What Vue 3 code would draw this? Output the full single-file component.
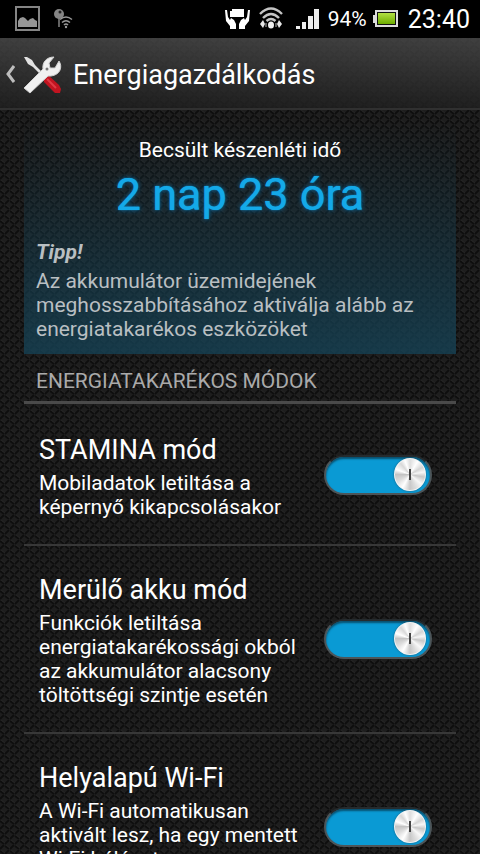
<script setup>
import { ref } from 'vue'

const modes = ref([
  {
    id: 'stamina',
    title: 'STAMINA mód',
    text: 'Mobiladatok letiltása a\nképernyő kikapcsolásakor',
    on: true,
  },
  {
    id: 'low-battery',
    title: 'Merülő akku mód',
    text: 'Funkciók letiltása\nenergiatakarékossági okból\naz akkumulátor alacsony\ntöltöttségi szintje esetén',
    on: true,
  },
  {
    id: 'location-wifi',
    title: 'Helyalapú Wi-Fi',
    text: 'A Wi-Fi automatikusan\naktivált lesz, ha egy mentett\nWi-Fi hálózat\nközelébe kerül',
    on: true,
  },
])
</script>

<template>
  <div class="screen">
    <svg class="weave" aria-hidden="true">
      <defs>
        <pattern id="weave" width="10" height="10" patternUnits="userSpaceOnUse">
          <rect width="10" height="10" fill="#1e1e1e" />
          <g stroke="#0e0e0e" stroke-width="2">
            <path d="M0 1l4 3M5 6l4 3" />
            <path d="M5 4l4-4M0 9l4-4" />
          </g>
          <path d="M1 0l4 3M6 5l4 3" stroke="#242424" stroke-width="1" />
        </pattern>
      </defs>
      <rect width="100%" height="100%" fill="url(#weave)" />
    </svg>

    <div class="status">
      <svg class="s-pic" width="26" height="26" viewBox="0 0 26 26">
        <rect x="1" y="1" width="23" height="23" fill="none" stroke="#858585" stroke-width="2" />
        <path d="M3 21v-6l2-3 3-1 2 1 3 3 2-2 3-1 2 2 2 1v6z" fill="#969696" />
      </svg>
      <svg class="s-key" width="22" height="22" viewBox="0 0 22 22">
        <circle cx="6" cy="6" r="5" fill="#858585" />
        <circle cx="7" cy="4" r="1.500" fill="#222" />
        <path d="M6 10v9" stroke="#858585" stroke-width="1.500" />
        <g fill="none" stroke="#999" stroke-width="1.500">
          <path d="M7 11.500q6-5 12 0M9 14.500q4-3.500 8 0M11 17q2-2 4 0" />
        </g>
        <circle cx="13" cy="19" r="1.200" fill="#999" />
      </svg>
      <span class="spacer"></span>
      <svg class="s-hand" width="25" height="22" viewBox="0 0 25 22">
        <path d="M5 3h2V1h12v8H5z" fill="#fff" />
        <path
          d="M0 2h2l1 7 2 3 1-2 3 2 2 4v5H5v-3l-4-5zM25 2h-2l-1 7-2 3-1-2-3 2-2 4v5h6v-3l4-5z"
          fill="#fff"
        />
      </svg>
      <svg class="s-wifi" width="24" height="24" viewBox="0 0 24 24">
        <g fill="none" stroke="#c4c4c4" stroke-width="2.400">
          <path d="M1 7q11-11 22 0M4 11q8-8 16 0M7.500 14q4.500-4 9 0" />
        </g>
        <ellipse cx="12" cy="18" rx="3" ry="3.500" fill="#f2f2f2" />
        <path d="M1 17l3-4 2 4-2 4zM23 17l-3-4-2 4 2 4z" fill="#e8e8e8" />
        <path d="M7 16v4M17 16v4" stroke="#bbb" />
      </svg>
      <svg class="s-signal" width="24" height="20" viewBox="0 0 24 20">
        <path d="M0 17h4v3H0zM6 13h4v7H6zM12 7h5v13h-5zM18 0h5v20h-5z" fill="#eee" />
      </svg>
      <span class="percent">94%</span>
      <svg class="s-batt" width="25" height="18" viewBox="0 0 25 18">
        <defs>
          <linearGradient id="charge" x1="0" y1="0" x2="0" y2="1">
            <stop offset="0" stop-color="#b2e043" />
            <stop offset="1" stop-color="#6ead00" />
          </linearGradient>
        </defs>
        <path d="M0 5h3v8H0z" fill="#ddd" />
        <rect x="3" y="1" width="21" height="15" fill="#111" stroke="#ddd" stroke-width="2" />
        <rect x="5" y="3" width="17" height="11" fill="url(#charge)" />
      </svg>
      <time class="clock">23:40</time>
    </div>

    <header class="bar">
      <a class="back" href="#" aria-label="Vissza">
        <svg width="11" height="20" viewBox="0 0 11 20">
          <path d="M10 1L4 9l6 8" fill="none" stroke="#bdbdbd" stroke-width="3" />
        </svg>
        <svg width="40" height="40" viewBox="0 0 40 40">
          <path d="M1 2l3 0 5 3 3 5 9 9-2 2-9-9-5-3z" fill="#e2e2e2" />
          <path d="M21 23l4-3 11 10 2 4-1 4-5 0-11-11z" fill="#c11420" />
          <path d="M24 24l9 9" stroke="#e03a45" stroke-width="2" />
          <path
            d="M1 33L20 14c-1-6 3-12 11-12l-5 6 1 5 5 0 4-7c4 6 1 14-8 15l-3 0L7 38z"
            fill="#f0f0f0"
            stroke="#cfcfcf"
            stroke-width="1"
          />
          <circle cx="24" cy="14" r="1.500" fill="#777" />
        </svg>
      </a>
      <h1>Energiagazdálkodás</h1>
    </header>

    <main>
      <section class="estimate">
        <p class="label">Becsült készenléti idő</p>
        <p class="time">2 nap 23 óra</p>
        <p class="tip">Tipp!</p>
        <p class="hint">Az akkumulátor üzemidejének meghosszabbításához aktiválja alább az energiatakarékos eszközöket</p>
      </section>

      <h2>ENERGIATAKARÉKOS MÓDOK</h2>
      <ul>
        <li v-for="mode in modes" :key="mode.id">
          <label :for="mode.id">
            <span class="name">{{ mode.title }}</span>
            <span class="text">{{ mode.text }}</span>
          </label>
          <input :id="mode.id" v-model="mode.on" class="toggle" type="checkbox" role="switch" />
        </li>
      </ul>
    </main>
  </div>
</template>

<style>
body {
  margin: 0;
  background: #151515;
}
</style>

<style scoped>
.screen {
  position: relative;
  isolation: isolate;
  height: 100vh;
  overflow: hidden;
  color: #fff;
  font-family: Roboto, "Noto Sans", sans-serif;
}
.weave {
  position: absolute;
  inset: 0;
  z-index: -1;
  width: 100%;
  height: 100%;
}
h1,
h2,
p,
ul {
  margin: 0;
  padding: 0;
  font-weight: 400;
}
.status {
  display: flex;
  align-items: center;
  height: 38px;
  padding: 0 10px 0 15px;
  background: #000;
}
.s-key {
  margin-left: 12px;
}
.spacer {
  flex: 1;
}
.s-wifi {
  margin-left: 9px;
}
.s-signal {
  margin-left: 13px;
}
.percent {
  margin-left: 8px;
  font-size: 21px;
}
.s-batt {
  margin-left: 6px;
}
.clock {
  margin-left: 10px;
  font-size: 25px;
}
.bar {
  display: flex;
  align-items: center;
  box-sizing: border-box;
  height: 72px;
  padding: 3px 0 0 4px;
  border-bottom: 2px solid #303030;
  background: linear-gradient(rgba(72, 72, 72, 0.8), rgba(32, 32, 32, 0.8));
}
.back {
  display: flex;
  align-items: center;
  gap: 8px;
  margin-right: 10px;
}
h1 {
  font-size: 27px;
  line-height: 32px;
}
main {
  padding: 12px 24px 0;
}
.estimate {
  padding: 16px 12px 13px;
  background: linear-gradient(rgba(22, 66, 85, 0), rgba(22, 66, 85, 0.8));
}
.label {
  font-size: 21px;
  line-height: 24px;
  text-align: center;
}
.time {
  color: #14a9e8;
  font-size: 45px;
  line-height: 66px;
  text-align: center;
  text-shadow: 0 0 1px #14a9e8, 0 0 5px rgba(0, 120, 190, 0.8);
}
.tip {
  margin-top: 12px;
  color: #b9bfc2;
  font-size: 21px;
  font-style: italic;
  font-weight: 700;
  line-height: 24px;
}
.hint {
  margin-top: 5px;
  color: #b9bfc2;
  font-size: 21px;
  line-height: 24px;
}
h2 {
  padding: 15px 12px 8px;
  border-bottom: 3px solid #4a4a4a;
  color: #aaa;
  font-size: 21px;
  line-height: 24px;
}
ul {
  padding-top: 2px;
  list-style: none;
}
li {
  display: flex;
  align-items: center;
  justify-content: space-between;
  padding: 24px 24px 25px 15px;
  border-bottom: 2px solid #383838;
}
label {
  padding-top: 4px;
}
.name,
.text {
  display: block;
}
.name {
  font-size: 27px;
  line-height: 32px;
}
.text {
  margin-top: 5px;
  font-size: 21px;
  line-height: 24px;
  white-space: pre-line;
}
.toggle {
  appearance: none;
  display: flex;
  align-items: center;
  flex: none;
  box-sizing: border-box;
  width: 108px;
  height: 40px;
  margin: 0;
  padding: 0 4px;
  border: 2px solid #4c5559;
  border-top-color: #252b2e;
  border-radius: 20px;
  background: #333;
  box-shadow: inset 0 2px 2px #08506f;
}
.toggle:checked {
  justify-content: flex-end;
  background: #0a9ad4;
}
.toggle::after {
  content: "";
  width: 32px;
  height: 33px;
  border-radius: 50%;
  background:
    linear-gradient(#444, #444) center / 2px 11px no-repeat,
    conic-gradient(#ddd, #fff 30deg, #d4d4d4 60deg, #f6f6f6 80deg, #c8c8c8 100deg, #f8f8f8 130deg, #ddd 155deg, #c8c8c8 180deg, #fff 210deg, #ddd 240deg, #c4c4c4 270deg, #fff 290deg, #d8d8d8 320deg, #fff 340deg, #ddd);
  box-shadow: inset 0 0 0 1px #f4f4f4, 0 0 2px #1b5570;
}
</style>
